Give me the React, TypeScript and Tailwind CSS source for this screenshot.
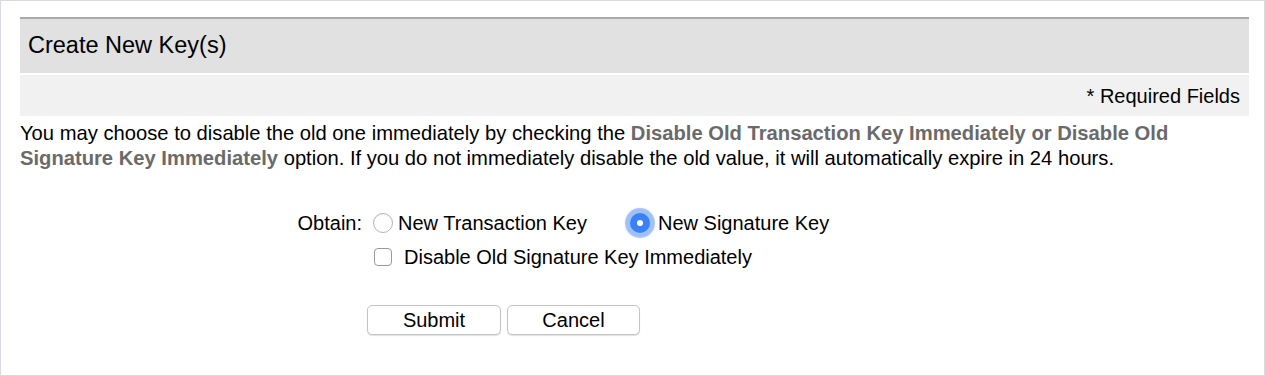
import React, { useState } from "react";

type KeyType = "transaction" | "signature";

const Radio: React.FC<{ checked: boolean; onClick: () => void }> = ({ checked, onClick }) => {
  if (checked) {
    return (
      <span
        onClick={onClick}
        className="flex h-[20px] w-[20px] shrink-0 cursor-pointer items-center justify-center rounded-full bg-[#3a80f6] shadow-[0_0_1px_5px_rgba(95,150,245,0.6)]"
      >
        <span className="h-[6px] w-[6px] rounded-full bg-white" />
      </span>
    );
  }
  return (
    <span
      onClick={onClick}
      className="h-[20px] w-[20px] shrink-0 cursor-pointer rounded-full border border-[#b4b4b4] bg-white shadow-[inset_0_1px_1px_rgba(0,0,0,0.05)]"
    />
  );
};

const App: React.FC = () => {
  const [keyType, setKeyType] = useState<KeyType>("signature");
  const [disableOld, setDisableOld] = useState(false);

  const disableLabel =
    keyType === "signature"
      ? "Disable Old Signature Key Immediately"
      : "Disable Old Transaction Key Immediately";

  return (
    <div className="h-[376px] w-[1265px] overflow-hidden border border-[#d9d9e2] bg-white font-['Liberation_Sans',Arial,sans-serif] text-black">
      <div className="ml-[19px] mr-[15px] mt-[16px]">
        {/* header */}
        <div className="flex h-[56px] items-center border-t-2 border-[#a9a9a9] bg-[#e1e1e1] px-[8px]">
          <h2 className="text-[23.5px] leading-none">Create New Key(s)</h2>
        </div>
        <div className="mt-[2px] flex h-[41px] items-center justify-end bg-[#f1f1f1] pr-[9px] text-[20px]">
          * Required Fields
        </div>

        {/* info */}
        <p className="mt-[5px] max-w-[1160px] text-[20.2px] leading-[25px]">
          You may choose to disable the old one immediately by checking the{" "}
          <span className="font-bold text-[#6a6a6a]">
            Disable Old Transaction Key Immediately or Disable Old Signature Key Immediately
          </span>{" "}
          option. If you do not immediately disable the old value, it will automatically expire in 24 hours.
        </p>

        {/* form */}
        <div className="mt-[42px] grid grid-cols-[353px_1fr] gap-y-[14px] text-[20px]">
          <div className="pr-[11px] text-right leading-[20px]">Obtain:</div>
          <div className="flex items-center">
            <Radio checked={keyType === "transaction"} onClick={() => setKeyType("transaction")} />
            <span className="ml-[5px] leading-[20px]">New Transaction Key</span>
            <span className="ml-[43px]">
              <Radio checked={keyType === "signature"} onClick={() => setKeyType("signature")} />
            </span>
            <span className="ml-[8px] leading-[20px]">New Signature Key</span>
          </div>

          <div />
          <label className="flex cursor-pointer items-center pl-[1px]">
            <input
              type="checkbox"
              checked={disableOld}
              onChange={(e) => setDisableOld(e.target.checked)}
              className="peer sr-only"
            />
            <span className="h-[18px] w-[18px] rounded-[4px] border border-[#9a9a9a] bg-white peer-checked:border-[#3a80f6] peer-checked:bg-[#3a80f6]" />
            <span className="ml-[12px] leading-[20px]">{disableLabel}</span>
          </label>

          <div />
          <div className="mt-[24px] flex gap-[6px]">
            <button className="-ml-[6px] h-[30px] w-[134px] rounded-[5px] border border-[#c4c4c4] bg-white text-[20px] leading-none shadow-[0_1px_1px_rgba(0,0,0,0.12)]">
              Submit
            </button>
            <button className="h-[30px] w-[133px] rounded-[5px] border border-[#c4c4c4] bg-white text-[20px] leading-none shadow-[0_1px_1px_rgba(0,0,0,0.12)]">
              Cancel
            </button>
          </div>
        </div>
      </div>
    </div>
  );
};

export default App;
